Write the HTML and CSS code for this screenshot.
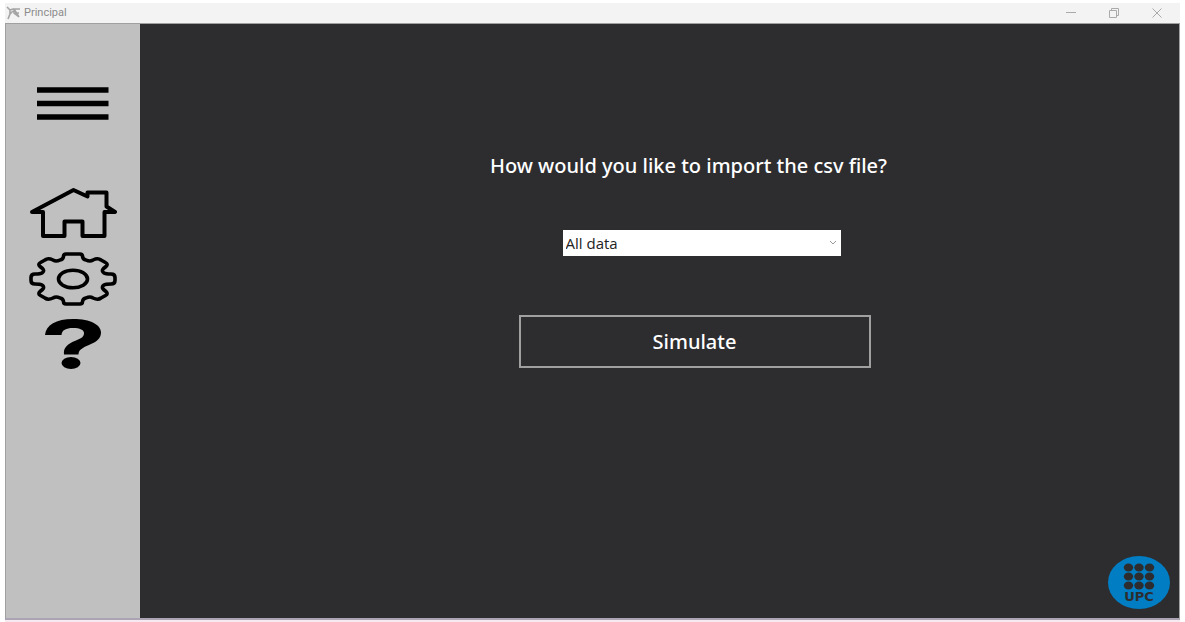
FILE: index.html
```html
<!DOCTYPE html>
<html lang="en">
<head>
<meta charset="utf-8">
<meta name="viewport" content="width=device-width, initial-scale=1">
<title>Principal</title>
<link rel="stylesheet" href="styles.css">
</head>
<body>
<div class="window">
  <header class="titlebar">
    <svg class="app-icon" viewBox="0 0 15 14" aria-hidden="true"><path d="M1 1l3 3v4l-2 5M4 4l3-1M4 8l3-3M7 3h7M8 3l5 8M8 3v4l5 4M9 7h4" fill="none" stroke="#a4a4a4" stroke-width="1.600"/></svg>
    <span class="app-name">Principal</span>
    <div class="window-controls">
      <button class="control" aria-label="Minimize"><svg viewBox="0 0 12 12"><path d="M1 5.500h10"/></svg></button>
      <button class="control" aria-label="Restore"><svg viewBox="0 0 12 12"><path d="M1.500 3.500h7v7h-7zM3.500 3.500v-2h7v7h-2"/></svg></button>
      <button class="control" aria-label="Close"><svg viewBox="0 0 12 12"><path d="M1.500 1.500l9 9M10.500 1.500l-9 9"/></svg></button>
    </div>
  </header>
  <div class="body">
    <nav class="sidebar" aria-label="Main">
      <button class="nav-button menu" aria-label="Menu">
        <svg width="72" height="34" viewBox="0 0 72 34"><path d="M0 3h71.500M0 16.500h71.500M0 30h71.500" stroke="#000" stroke-width="5.500"/></svg>
      </button>
      <button class="nav-button" aria-label="Home">
        <svg width="88" height="52" viewBox="0 0 88 52"><path d="M3 25L44.500 3L58.500 9.500V5.500H77.500V19.500L86 25H75.500V49H53.500V34.500H35.500V49H14V25Z" fill="none" stroke="#000" stroke-width="4" stroke-linejoin="round"/></svg>
      </button>
      <button class="nav-button" aria-label="Settings">
        <svg width="90" height="56" viewBox="0 0 90 56">
          <defs><path id="gear-quarter" d="M0 -25H-7Q-9.500 -25 -9.500 -22.500Q-10 -19.500 -13 -19Q-17 -17 -20 -19Q-25 -21.500 -28 -19L-32.500 -16.500Q-35.500 -15 -33 -12.500L-30.500 -10.500Q-28 -8 -31 -6Q-32.500 -5 -38 -5Q-42 -5 -42 -1.500V0"/></defs>
          <g transform="translate(45 28)" fill="none" stroke="#000" stroke-width="3.600" stroke-linejoin="round">
            <use href="#gear-quarter"/>
            <use href="#gear-quarter" transform="scale(-1 1)"/>
            <use href="#gear-quarter" transform="scale(1 -1)"/>
            <use href="#gear-quarter" transform="scale(-1 -1)"/>
            <ellipse rx="14.500" ry="8.800"/>
          </g>
        </svg>
      </button>
      <button class="nav-button" aria-label="Help">
        <svg width="56" height="50" viewBox="0 0 56 50"><path d="M0 16C1 6 11 0 28 0C46 0 56 6 56 13.500C56 20 51 23 44 26C37 29 33.500 31 33.500 35.500H19C18 29 22 25 31 21.500C37 19 39 17.500 39 14C39 11 35 9 28 9C21 9 17 11 16.500 16Z"/><ellipse cx="26" cy="44" rx="9.500" ry="6"/></svg>
      </button>
    </nav>
    <main class="content">
      <form class="import-form">
        <label class="question" for="import-mode">How would you like to import the csv file?</label>
        <div class="select-wrap">
          <select class="mode" id="import-mode"><option>All data</option></select>
          <svg class="chevron" viewBox="0 0 8 6" aria-hidden="true"><path d="M1 1l3 3l3-3" fill="none" stroke="#999"/></svg>
        </div>
        <button class="simulate" type="button">Simulate</button>
      </form>
      <svg class="logo" viewBox="0 0 62 53" role="img" aria-label="UPC">
        <ellipse cx="31" cy="26.500" rx="31" ry="26.500" fill="#007dc3"/>
        <g fill="#2d2d30">
          <ellipse cx="20.500" cy="11.500" rx="4.700" ry="4"/><ellipse cx="31" cy="11.500" rx="4.700" ry="4"/><ellipse cx="41.500" cy="11.500" rx="4.700" ry="4"/>
          <ellipse cx="20.500" cy="20.500" rx="4.700" ry="4"/><ellipse cx="31" cy="20.500" rx="4.700" ry="4"/><ellipse cx="41.500" cy="20.500" rx="4.700" ry="4"/>
          <ellipse cx="20.500" cy="29.500" rx="4.700" ry="4"/><ellipse cx="31" cy="29.500" rx="4.700" ry="4"/><ellipse cx="41.500" cy="29.500" rx="4.700" ry="4"/>
          <text class="logo-text" x="31" y="45" text-anchor="middle">UPC</text>
        </g>
      </svg>
    </main>
  </div>
</div>
</body>
</html>
```
FILE: styles.css
```css
* { box-sizing: border-box; }
body {
  margin: 0;
  background: #fff;
  font-family: "Noto Sans", "Open Sans", sans-serif;
}
button { font: inherit; padding: 0; border: 0; background: none; }
svg { display: block; }
.window {
  display: flex;
  flex-direction: column;
  min-height: 100vh;
  padding: 3px 5px 2px;
}
.titlebar {
  display: flex;
  align-items: center;
  height: 20px;
  padding: 0 2px 0 1px;
  background: #f3f3f3;
}
.app-icon { width: 15px; height: 14px; }
.app-name { margin-left: 3px; font-family: Roboto, sans-serif; font-size: 11px; line-height: 20px; color: #8c8c8c; }
.window-controls { display: flex; margin-left: auto; }
.control { display: grid; place-items: center; width: 43px; height: 20px; }
.control svg { width: 12px; height: 12px; fill: none; stroke: #aaa; }
.body {
  display: flex;
  flex: 1;
  border: 1px solid #a0a0a0;
  border-bottom: 2px solid #aaa4b4;
  box-shadow: 0 2px 1px #f6eaf0;
}
.sidebar {
  display: flex;
  flex-direction: column;
  align-items: center;
  gap: 12px;
  flex: none;
  width: 134px;
  padding-top: 63px;
  background: #c0c0c0;
}
.menu { margin-bottom: 54px; }
.content {
  position: relative;
  flex: 1;
  padding: 126px 0 80px 70px;
  background: #2d2d30;
}
.import-form { display: flex; flex-direction: column; align-items: center; }
.question {
  margin-right: 12px;
  font-size: 20px;
  font-weight: 500;
  line-height: 32px;
  color: #fff;
}
.select-wrap { position: relative; width: 278px; margin: 48px 0 59px 14px; }
.mode {
  display: block;
  appearance: none;
  width: 100%;
  height: 26px;
  padding: 0 24px 0 3px;
  border: 0;
  border-radius: 0;
  background: #fff;
  color: #222;
  font: 15px/26px "Open Sans", sans-serif;
}
.chevron { position: absolute; top: 10px; right: 4px; width: 8px; height: 6px; pointer-events: none; }
.simulate {
  width: 352px;
  max-width: 100%;
  height: 53px;
  border: 2px solid #a0a0a0;
  color: #fff;
  font-size: 20px;
  font-weight: 500;
}
.logo { position: absolute; right: 9px; bottom: 9px; width: 62px; height: 53px; }
.logo-text { font: 700 13px "DejaVu Sans", sans-serif; }
```
